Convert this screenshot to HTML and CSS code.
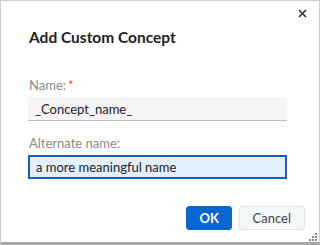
FILE: index.html
```html
<!DOCTYPE html>
<html lang="en">
<head>
<meta charset="UTF-8">
<title>Add Custom Concept</title>
<link rel="stylesheet" href="styles.css">
</head>
<body>
<div class="dialog">
    <div class="titlebar">
        <button class="closeBtn" title="Close">
            <svg width="9" height="9" viewBox="0 0 9 9"><path d="M1 1L8 8M8 1L1 8" stroke="#333" stroke-width="1.6"/></svg>
        </button>
    </div>
    <h2 class="title">Add Custom Concept</h2>
    <div class="form">
        <label class="field">
            <span class="label">Name:<span class="req">*</span></span>
            <input class="input" type="text" value="_Concept_name_">
        </label>
        <label class="field">
            <span class="label">Alternate name:</span>
            <input class="input focused" type="text" value="a more meaningful name">
        </label>
    </div>
    <div class="actions">
        <button class="btn primary">OK</button>
        <button class="btn">Cancel</button>
    </div>
    <div class="grip">
        <svg width="8" height="8" viewBox="0 0 8 8" fill="#888"><rect x="6" y="0" width="2" height="2"/><rect x="3" y="3" width="2" height="2"/><rect x="6" y="3" width="2" height="2"/><rect x="0" y="6" width="2" height="2"/><rect x="3" y="6" width="2" height="2"/><rect x="6" y="6" width="2" height="2"/></svg>
    </div>
</div>
</body>
</html>
```

FILE: styles.css
```css
html, body {
    margin: 0;
    padding: 0;
}
body {
    font-family: Lato, "Noto Sans", sans-serif;
    background-color: #fff;
}
.dialog {
    position: relative;
    box-sizing: border-box;
    width: 320px;
    height: 245px;
    border: 1px solid #d0d0d0;
    border-bottom: 3px solid #a8a8a8;
    background-color: #fff;
    padding: 0 14px 0 27px;
}
.titlebar {
    display: flex;
    justify-content: flex-end;
    height: 22px;
    padding-top: 4px;
    margin-right: -6px;
}
.closeBtn {
    border: none;
    background: none;
    padding: 3px;
    width: 17px;
    height: 17px;
    cursor: pointer;
    display: flex;
    align-items: center;
    justify-content: center;
}
.title {
    margin: 0;
    font-size: 15.5px;
    font-weight: 700;
    color: #222;
    line-height: 20px;
    padding-left: 1px;
}
.form {
    margin-top: 30px;
    width: 259px;
}
.field {
    display: flex;
    flex-direction: column;
    margin-bottom: 14px;
}
.label {
    font-size: 13px;
    color: #8a8a8a;
    line-height: 16px;
    margin-bottom: 4px;
    padding-left: 1px;
}
.req {
    color: #e04848;
    margin-left: 2px;
}
.input {
    box-sizing: border-box;
    height: 24px;
    border: none;
    border-bottom: 1px solid #b8bcc4;
    background-color: #f5f5f5;
    font-family: inherit;
    font-size: 13px;
    color: #222;
    padding: 0 7px;
    outline: none;
}
.input.focused {
    border: 2px solid #1a5fb4;
    background-color: #e2efff;
    padding: 0 6px;
}
.actions {
    display: flex;
    justify-content: flex-end;
    gap: 7px;
    margin-top: 27px;
}
.btn {
    height: 24px;
    padding: 0 13px;
    border: 1px solid #e2e4e8;
    border-radius: 3px;
    background-color: #f6f7f9;
    color: #444;
    font-family: inherit;
    font-size: 13px;
    cursor: pointer;
}
.btn.primary {
    background-color: #0a66d1;
    border-color: #0a66d1;
    color: #fff;
    font-weight: 700;
    width: 46px;
}
.grip {
    position: absolute;
    right: 2px;
    bottom: 1px;
    line-height: 0;
}
```
